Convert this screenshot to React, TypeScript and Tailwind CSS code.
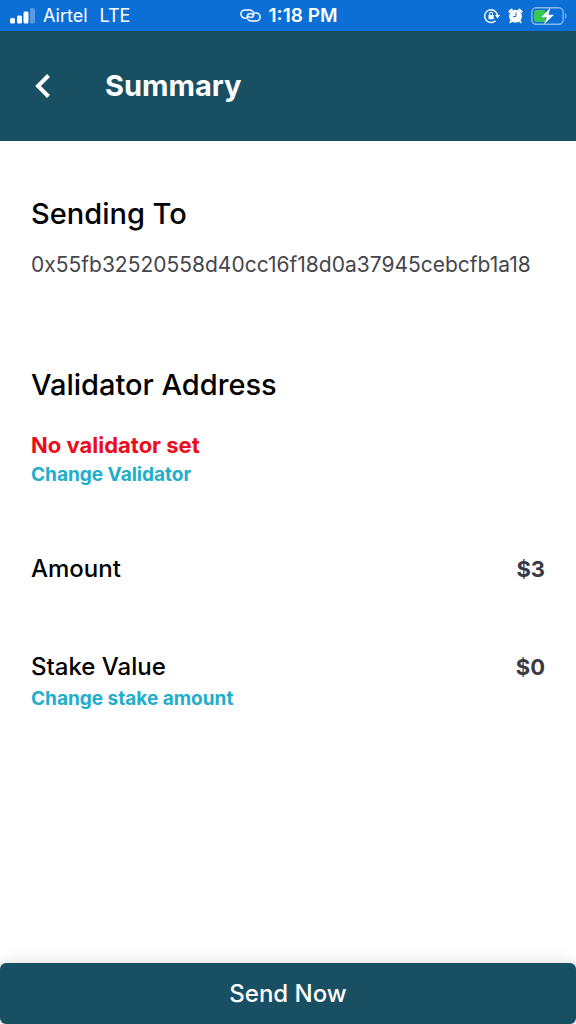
import { ReactNode } from "react";

const SignalIcon = () => (
  <svg className="w-[25px] h-4" viewBox="0 0 25 16" fill="white" aria-hidden="true">
    <rect x="0" y="10" width="5" height="5.5" rx="1.5" />
    <rect x="7" y="7.5" width="5" height="8" rx="1.5" />
    <rect x="13.5" y="3.5" width="5" height="12" rx="1.5" />
    <rect x="20" y="0" width="5" height="15.5" rx="1.5" opacity="0.3" />
  </svg>
);

const HotspotIcon = () => (
  <svg
    className="w-[21px] h-[13px]"
    viewBox="0 0 21 13"
    fill="none"
    stroke="white"
    strokeWidth="1.5"
    strokeLinecap="round"
    aria-hidden="true"
  >
    <path d="M6 9.3C3 9.3 .9 7.400.9 5.100.9 2.700 2.900.9 5.300.9H9.200c2.600 0 4.600 1.800 4.600 4 0 2-1.500 3.500-3.300 3.500-1 0-1.700-.4-2-1" />
    <path d="M15 3.700c3 0 5.100 1.900 5.100 4.200 0 2.400-2 4.200-4.400 4.200h-3.900c-2.600 0-4.600-1.800-4.600-4 0-2 1.500-3.500 3.300-3.500 1 0 1.700.4 2 1" />
  </svg>
);

const RotationLockIcon = () => (
  <svg className="w-4 h-4" viewBox="0 0 16 16" fill="none" stroke="white" aria-hidden="true">
    <path d="M11.5 12.8A6.4 6.4 0 1 1 13.4 7" strokeWidth="1.4" />
    <path d="M11 7h5l-2.5 3.4z" fill="white" stroke="none" />
    <rect x="4.5" y="7" width="5.2" height="4.2" rx="0.6" fill="white" stroke="none" />
    <path d="M5.6 7.2V5.7a1.5 1.5 0 0 1 3 0v1.5" strokeWidth="1.1" />
  </svg>
);

const AlarmIcon = () => (
  <svg className="w-[15px] h-4" viewBox="0 0 15 16" aria-hidden="true">
    <circle cx="7.5" cy="8.2" r="6.4" fill="white" />
    <g fill="none" stroke="white" strokeLinecap="round">
      <path d="M1.6 3.6 3.6 1.8M13.4 3.6 11.4 1.8" strokeWidth="2.4" />
      <path d="M3.5 12.8 2.2 14.4M11.5 12.8l1.3 1.6" strokeWidth="1.8" />
    </g>
    <path d="M8 4.6v4H5" fill="none" stroke="#0c6fd6" strokeWidth="1" />
  </svg>
);

const BatteryIcon = () => (
  <svg className="w-9 h-[18px]" viewBox="0 0 36 18" aria-hidden="true">
    <rect x="0.8" y="0.8" width="31.4" height="16.4" rx="4.5" fill="none" stroke="white" strokeOpacity="0.5" strokeWidth="1.4" />
    <path d="M34 6.2c2 .9 2 4.7 0 5.6z" fill="white" fillOpacity="0.5" />
    <path d="M5.5 3H14v12H5.5A2.5 2.5 0 0 1 3 12.5v-7A2.5 2.5 0 0 1 5.5 3z" fill="#35c759" />
    <path d="M19.4 .4 10.4 10.300h5.400L12.800 17.600 23 7.700h-5.600z" fill="white" />
  </svg>
);

const StatusBar = () => (
  <div className="grid grid-cols-3 items-center h-[31px] pl-2.5 pr-[9px] bg-[#0c6fd6] text-white text-lg">
    <div className="flex items-center gap-2">
      <SignalIcon />
      <span>Airtel</span>
      <span className="ml-1">LTE</span>
    </div>
    <div className="flex items-center justify-center gap-2">
      <HotspotIcon />
      <span className="text-[19px] font-semibold whitespace-nowrap">1:18 PM</span>
    </div>
    <div className="flex items-center justify-end gap-2">
      <RotationLockIcon />
      <AlarmIcon />
      <BatteryIcon />
    </div>
  </div>
);

const Header = ({ title }: { title: string }) => (
  <header className="flex items-center h-[110px] px-[31px] bg-[#184f63] text-white">
    <button aria-label="Back" className="w-[74px] h-10 cursor-pointer">
      <svg className="w-6 h-7" viewBox="0 0 24 28" fill="none" stroke="white" strokeWidth="4" aria-hidden="true">
        <path d="M17.500 3.500 7 14l10.500 10.500" />
      </svg>
    </button>
    <h1 className="text-[29px] leading-10 font-bold">{title}</h1>
  </header>
);

const SectionTitle = ({ children }: { children: ReactNode }) => (
  <h2 className="text-[29px] leading-10 font-medium">{children}</h2>
);

const ActionButton = ({ children }: { children: ReactNode }) => (
  <button className="block text-[19px] leading-7 font-bold text-[#1eaecb] cursor-pointer">
    {children}
  </button>
);

const Row = ({ label, value }: { label: string; value: string }) => (
  <div className="flex items-center justify-between h-9">
    <h3 className="text-2xl font-medium">{label}</h3>
    <p className="text-[22px] font-bold text-[#393a46]">{value}</p>
  </div>
);

const App = () => {
  return (
    <div className="flex flex-col min-h-screen bg-white text-black font-['Inter',sans-serif]">
      <StatusBar />
      <Header title="Summary" />
      <main className="flex-1 px-[31px] pt-[53px]">
        <section>
          <SectionTitle>Sending To</SectionTitle>
          <p className="mt-[15px] text-[21px] leading-8 text-[#45464b] break-all">
            0x55fb32520558d40cc16f18d0a37945cebcfb1a18
          </p>
        </section>
        <section className="mt-[84px]">
          <SectionTitle>Validator Address</SectionTitle>
          <p className="mt-6 text-[22px] leading-8 font-bold text-[#ec0c1c]">No validator set</p>
          <ActionButton>Change Validator</ActionButton>
        </section>
        <section className="mt-[62px]">
          <Row label="Amount" value="$3" />
        </section>
        <section className="mt-[62px]">
          <Row label="Stake Value" value="$0" />
          <ActionButton>Change stake amount</ActionButton>
        </section>
      </main>
      <button className="h-[61px] w-full rounded-md bg-[#184f63] text-white text-2xl font-medium shadow-[0_0_16px_rgba(0,0,0,0.15)] cursor-pointer">
        Send Now
      </button>
    </div>
  );
};

export default App;
